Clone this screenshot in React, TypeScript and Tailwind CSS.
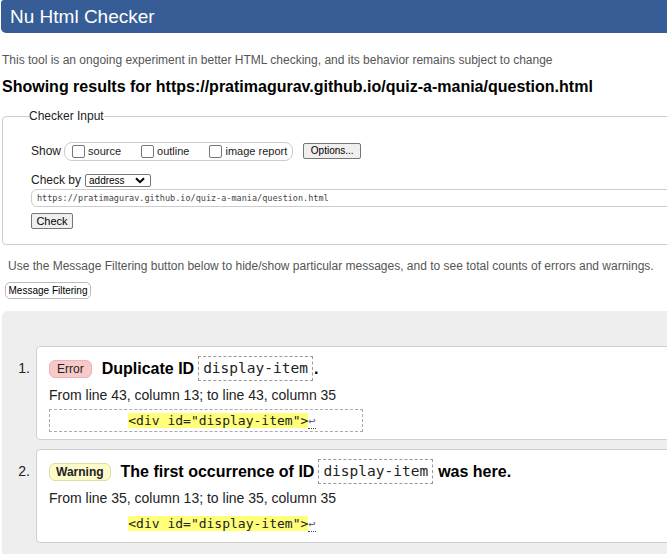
type Msg = {
  kind: 'Error' | 'Warning';
  before: string;
  code: string;
  after: string;
  location: string;
  boxed: boolean;
};

const messages: Msg[] = [
  {
    kind: 'Error',
    before: 'Duplicate ID',
    code: 'display-item',
    after: '.',
    location: 'From line 43, column 13; to line 43, column 35',
    boxed: true,
  },
  {
    kind: 'Warning',
    before: 'The first occurrence of ID',
    code: 'display-item',
    after: 'was here.',
    location: 'From line 35, column 13; to line 35, column 35',
    boxed: false,
  },
];

function Checkbox({ label }: { label: string }) {
  return (
    <label className="flex items-center">
      <span className="w-[13px] h-[13px] border border-[#767676] rounded-[2px] bg-white" />
      <span className="ml-[3px] text-[11px] text-[#222]">{label}</span>
    </label>
  );
}

function MessageItem({ msg, index }: { msg: Msg; index: number }) {
  const badge =
    msg.kind === 'Error'
      ? 'bg-[#f7c9c9] border-[#eab4b4] font-normal px-[7px]'
      : 'bg-[#fdfbc9] border-[#e2dca6] font-semibold px-[6px]';
  return (
    <li className="flex">
      <div className="w-[34px] shrink-0 pr-[6px] text-right text-[14px] leading-[25px] mt-[10px] text-[#222]">
        {index}.
      </div>
      <div className="w-[700px] bg-white border border-[#cfcfcf] rounded-[4px] pl-[12px] pt-[9px] pb-[7px]">
        <div className="flex items-center h-[25px]">
          <span className={`h-[18px] border rounded-[6px] text-[12px] leading-[16px] text-[#222] ${badge}`}>
            {msg.kind}
          </span>
          <span className="ml-[10px] text-[16px] font-bold text-black">{msg.before}</span>
          <code className="ml-[4px] h-[25px] px-[4px] border border-dashed border-[#999] font-['DejaVu_Sans_Mono',monospace] text-[14.5px] leading-[23px] text-[#222]">
            {msg.code}
          </code>
          <span className={`text-[16px] font-bold text-black ${msg.after === '.' ? 'ml-[1px]' : 'ml-[5px]'}`}>
            {msg.after}
          </span>
        </div>
        <p className="mt-[5px] text-[14px] leading-[18px] text-[#222]">{msg.location}</p>
        <div
          className={`mt-[5px] w-[314px] h-[23px] border border-dashed ${
            msg.boxed ? 'border-[#aaa]' : 'border-transparent'
          } font-['DejaVu_Sans_Mono',monospace] text-[13px] leading-[21px] whitespace-pre text-[#222]`}
        >
          {'          '}
          <mark className="bg-[#ffff7a] text-[#222]">{'<div id="display-item">'}</mark>
          <span className="text-[#666] border-b border-dotted border-[#444] text-[12px]">↩</span>
        </div>
      </div>
    </li>
  );
}

export default function App() {
  return (
    <div className="w-[667px] h-[554px] overflow-hidden bg-white font-['Liberation_Sans',Arial,sans-serif]">
      <header className="ml-[1px] h-[33px] bg-[#365d95] rounded-bl-[5px] rounded-tl-[3px] pl-[9px] text-[19px] leading-[33px] text-white">
        Nu Html Checker
      </header>

      <p className="mt-[19px] pl-[2px] text-[12px] leading-[16px] text-[#555]">
        This tool is an ongoing experiment in better HTML checking, and its behavior remains subject to change
      </p>
      <h2 className="mt-[9px] pl-[2px] text-[16px] leading-[20px] font-bold text-black whitespace-nowrap">
        Showing results for https://pratimagurav.github.io/quiz-a-mania/question.html
      </h2>

      <fieldset className="mt-[12px] ml-[2px] w-[720px] border border-[#ccc] rounded-[4px] pb-[15px]">
        <legend className="ml-[26px] text-[12px] leading-[15px] text-[#222]">Checker Input</legend>
        <div className="pl-[28px]">
          <div className="mt-[17px] flex items-center h-[20px]">
            <span className="text-[12px] text-[#222]">Show</span>
            <div className="ml-[3px] flex items-center gap-[20px] h-[19px] border border-[#ccc] rounded-[8px] pl-[7px] pr-[5px]">
              <Checkbox label="source" />
              <Checkbox label="outline" />
              <Checkbox label="image report" />
            </div>
            <button className="ml-[10px] w-[58px] h-[16px] bg-[#efefef] border border-[#767676] rounded-[2px] text-[10px] leading-[14px] text-black">
              Options...
            </button>
          </div>

          <div className="mt-[11px] flex items-center h-[16px]">
            <span className="text-[12px] text-[#222]">Check by</span>
            <div className="ml-[4px] w-[66px] h-[13px] border border-[#767676] rounded-[2px] flex items-center justify-between pl-[3px] pr-[5px]">
              <span className="text-[10px] leading-[11px] text-black">address</span>
              <svg width="10" height="7" viewBox="0 0 10 7">
                <path d="M1 1.2l4 4 4-4" fill="none" stroke="#000" strokeWidth="2" />
              </svg>
            </div>
          </div>

          <div className="mt-[1px] h-[18px] border border-[#ccc] rounded-[6px] pl-[5px] font-['DejaVu_Sans_Mono',monospace] text-[8.5px] leading-[16px] text-[#444]">
            https://pratimagurav.github.io/quiz-a-mania/question.html
          </div>

          <button className="mt-[6px] block w-[42px] h-[16px] bg-[#efefef] border border-[#767676] rounded-[2px] text-[11px] leading-[14px] text-black">
            Check
          </button>
        </div>
      </fieldset>

      <p className="mt-[13px] pl-[8px] text-[12px] leading-[16px] text-[#555] whitespace-nowrap">
        Use the Message Filtering button below to hide/show particular messages, and to see total counts of errors and warnings.
      </p>
      <button className="mt-[8px] ml-[5px] block w-[86px] h-[17px] bg-white border border-[#bbb] rounded-[5px] text-[10px] leading-[15px] text-black">
        Message Filtering
      </button>

      <div className="mt-[12px] ml-[2px] w-[720px] h-[300px] bg-[#eeeeee] rounded-tl-[6px] pt-[35px]">
        <ol className="flex flex-col gap-[9px]">
          {messages.map((m, i) => (
            <MessageItem key={i} msg={m} index={i + 1} />
          ))}
        </ol>
      </div>
    </div>
  );
}
